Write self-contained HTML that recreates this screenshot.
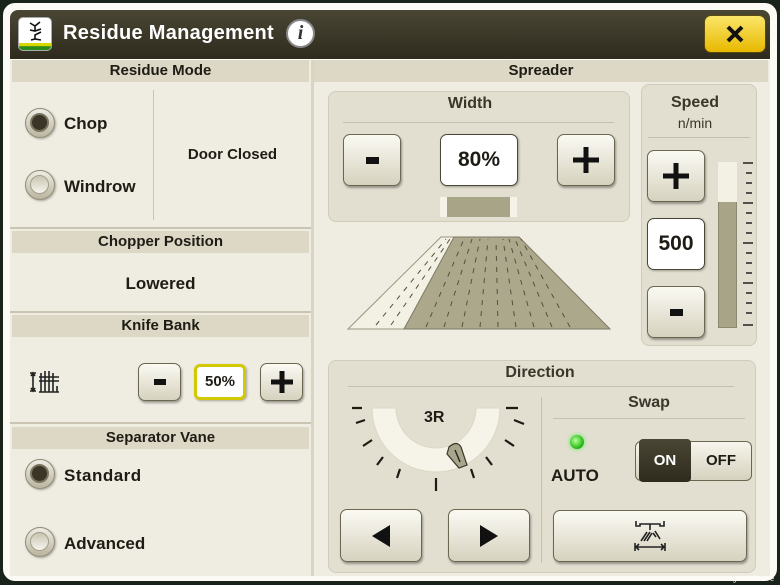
<!DOCTYPE html>
<html><head><meta charset="utf-8"><style>
*{box-sizing:border-box;margin:0;padding:0}
body{width:780px;height:585px;background:#1a231a;position:relative;overflow:hidden;font-family:"Liberation Sans","DejaVu Sans",sans-serif;font-weight:bold;color:#1e1c14}
.a{position:absolute}
.scr{left:3px;top:3px;width:774px;height:578px;background:#fbfaf5;border-radius:12px}
.tb{left:10px;top:10px;width:760px;height:49px;background:linear-gradient(#4a4634,#2e2b1e);border-radius:8px 8px 0 0}
.body{background:#efece1}
.hd{background:#dcd8c5;text-align:center;font-size:15px;line-height:22px}
.btn{background:linear-gradient(#fbfaf3,#d6d2bf);border:1.5px solid #6b6650;border-radius:7px;box-shadow:1px 2px 2px rgba(0,0,0,.35);display:flex;align-items:center;justify-content:center}
.val{background:#fff;border:1.5px solid #4b4738;border-radius:7px;text-align:center;font-size:21px;box-shadow:1px 1px 2px rgba(0,0,0,.3)}
.grp{background:#e2dfd1;border:1px solid #d0ccba;border-radius:8px}
.rad{width:30px;height:30px;border-radius:50%;background:linear-gradient(#efede4,#b9b59f);border:1.5px solid #8f8b77;box-shadow:1px 1px 2px rgba(0,0,0,.3)}
.rad i{position:absolute;left:4px;top:4px;width:19px;height:19px;border-radius:50%;background:linear-gradient(#c9c5b2,#f6f4ec);border:1px solid #a29e88}
.rad.on i{background:#3a3526;border:2px solid #7a7560}
.t{font-size:17px}
.c{text-align:center}
</style></head><body>
<div class="a scr"></div>
<div class="a tb"></div>
<div class="a" style="left:18px;top:17px;width:34px;height:34px;background:#fff;border-radius:5px;overflow:hidden;border:1px solid #aaa"><div class="a" style="left:0;top:25px;width:34px;height:9px;background:linear-gradient(#d8d800 30%,#2a8a1a 40%)"></div>
<svg class="a" style="left:8px;top:2px" width="18" height="22" viewBox="0 0 18 22"><g stroke="#111" stroke-width="1.6" fill="none"><path d="M3 3l5 3 5-4M8 6v5M3 10l5 1 6-2M14 12l-6 3v4M4 20l4-1 6 1"/></g></svg></div>
<div class="a" style="left:63px;top:22px;color:#fff;font-size:20px;letter-spacing:.3px">Residue Management</div>
<div class="a" style="left:286px;top:19px;width:29px;height:29px;border-radius:50%;background:#fff;border:2px solid #888;color:#333;font-family:'Liberation Serif',serif;font-style:italic;font-size:20px;text-align:center;line-height:25px">i</div>
<div class="a" style="left:704px;top:15px;width:62px;height:38px;background:linear-gradient(#fbe66a,#e7b800);border:1.5px solid #5a4a10;border-radius:7px"><svg class="a" style="left:21px;top:9px" width="18" height="18"><path d="M2 2L16 16M16 2L2 16" stroke="#111" stroke-width="4"/></svg></div>

<!-- left -->
<div class="a body" style="left:10px;top:60px;width:301px;height:516px"></div>
<div class="a hd" style="left:12px;top:60px;width:297px;height:22px">Residue Mode</div>
<div class="a" style="left:153px;top:90px;width:1px;height:130px;background:#c9c5b2"></div>
<div class="a rad on" style="left:25px;top:108px"><i></i></div><div class="a t" style="left:64px;top:114px">Chop</div>
<div class="a rad" style="left:25px;top:170px"><i></i></div><div class="a t" style="left:64px;top:177px">Windrow</div>
<div class="a" style="left:154px;top:146px;width:157px;text-align:center;font-size:15px">Door Closed</div>
<div class="a" style="left:10px;top:227px;width:301px;height:2px;background:#c9c5b2"></div>
<div class="a hd" style="left:12px;top:231px;width:297px;height:22px">Chopper Position</div>
<div class="a t c" style="left:10px;top:274px;width:301px">Lowered</div>
<div class="a" style="left:10px;top:311px;width:301px;height:2px;background:#c9c5b2"></div>
<div class="a hd" style="left:12px;top:315px;width:297px;height:22px">Knife Bank</div>
<svg class="a" style="left:28px;top:368px" width="36" height="28" viewBox="0 0 36 28"><g stroke="#222" stroke-width="1.6" fill="none"><path d="M5 5v18M2 5h6M2 23h6M3 8l2-3 2 3M3 20l2 3 2-3"/><path d="M13 5v15M17 3v17M21 3v17M25 5v15M11 9h20M11 13h20M11 24h20M13 18v6M17 18v6M21 18v6M25 18v6M29 18v6"/></g></svg>
<div class="a btn" style="left:138px;top:363px;width:43px;height:38px"><svg width="12" height="6"><rect width="12" height="6" fill="#111"/></svg></div>
<div class="a val" style="left:194px;top:364px;width:52px;height:36px;border:3px solid #d4c800;font-size:15px;line-height:30px;border-radius:6px">50%</div>
<div class="a btn" style="left:260px;top:363px;width:43px;height:38px"><svg width="24" height="24"><path d="M12 1v22M1 12h22" stroke="#111" stroke-width="5"/></svg></div>
<div class="a" style="left:10px;top:422px;width:301px;height:2px;background:#c9c5b2"></div>
<div class="a hd" style="left:12px;top:427px;width:297px;height:22px">Separator Vane</div>
<div class="a rad on" style="left:25px;top:459px"><i></i></div><div class="a t" style="left:64px;top:466px;letter-spacing:.5px">Standard</div>
<div class="a rad" style="left:25px;top:527px"><i></i></div><div class="a t" style="left:64px;top:534px">Advanced</div>

<!-- right -->
<div class="a body" style="left:314px;top:60px;width:456px;height:516px"></div>
<div class="a" style="left:311px;top:60px;width:3px;height:516px;background:#d9d5c3"></div>
<div class="a hd" style="left:314px;top:60px;width:454px;height:22px">Spreader</div>
<div class="a grp" style="left:328px;top:91px;width:302px;height:131px"></div>
<div class="a c" style="left:328px;top:95px;width:284px;font-size:16px;color:#3a372a">Width</div>
<div class="a" style="left:343px;top:122px;width:271px;height:1px;background:#c4c0ad"></div>
<div class="a btn" style="left:343px;top:134px;width:58px;height:52px"><svg width="13" height="7"><rect width="13" height="7" fill="#111"/></svg></div>
<div class="a val" style="left:440px;top:134px;width:78px;height:52px;line-height:50px">80%</div>
<div class="a btn" style="left:557px;top:134px;width:58px;height:52px"><svg width="28" height="28"><path d="M14 1v26M1 14h26" stroke="#111" stroke-width="5"/></svg></div>
<div class="a" style="left:440px;top:197px;width:77px;height:20px;background:#f5f3e8"></div>
<div class="a" style="left:447px;top:197px;width:63px;height:20px;background:#a8a487"></div>
<svg class="a" style="left:346px;top:235px" width="268" height="98" viewBox="0 0 268 98">
<polygon points="2,94 95,2 110,2 58,94" fill="#f3f1e4" stroke="#9a9680"/>
<polygon points="58,94 108,2 173,2 264,94" fill="#aca88c" stroke="#7e7a64"/>
<g stroke="#555040" stroke-width="1" stroke-dasharray="5,6" fill="none">
<path d="M30 90L100 4M45 90L104 4"/>
<path d="M80 92L118 4M98 92L126 4M116 92L134 4M134 92L142 4M152 92L150 4M170 92L157 4M188 92L163 4M206 92L169 4M224 92L175 4"/></g></svg>
<div class="a grp" style="left:641px;top:84px;width:116px;height:262px"></div>
<div class="a c" style="left:641px;top:94px;width:108px;font-size:16px;color:#3a372a">Speed</div>
<div class="a c" style="left:641px;top:115px;width:108px;font-size:14px;font-weight:normal;color:#3a372a">n/min</div>
<div class="a" style="left:648px;top:137px;width:102px;height:1px;background:#c4c0ad"></div>
<div class="a btn" style="left:647px;top:150px;width:58px;height:52px"><svg width="28" height="28"><path d="M14 1v26M1 14h26" stroke="#111" stroke-width="5"/></svg></div>
<div class="a val" style="left:647px;top:218px;width:58px;height:52px;line-height:50px">500</div>
<div class="a btn" style="left:647px;top:286px;width:58px;height:52px"><svg width="13" height="7"><rect width="13" height="7" fill="#111"/></svg></div>
<div class="a" style="left:718px;top:162px;width:19px;height:166px;background:#a8a487;border:1px solid #8d896f"></div>
<div class="a" style="left:718px;top:162px;width:19px;height:40px;background:#f3f1e4"></div>
<svg class="a" style="left:741px;top:160px" width="14" height="170"><g stroke="#222" stroke-width="1.4"><path d="M2 3h10M5 13h6M5 23h6M5 33h6M2 43h10M5 53h6M5 63h6M5 73h6M2 83h10M5 93h6M5 103h6M5 113h6M2 123h10M5 133h6M5 143h6M5 153h6M2 165h10"/></g></svg>

<div class="a grp" style="left:328px;top:360px;width:428px;height:213px"></div>
<div class="a c" style="left:328px;top:364px;width:424px;font-size:16px;color:#3a372a">Direction</div>
<div class="a" style="left:348px;top:386px;width:386px;height:1px;background:#c4c0ad"></div>
<div class="a" style="left:541px;top:397px;width:1px;height:166px;background:#c4c0ad"></div>
<svg class="a" style="left:345px;top:395px" width="180" height="100" viewBox="345 395 180 100">
<path d="M372 408A64 64 0 0 0 500 408L476 408A40 40 0 0 1 396 408Z" fill="#f6f4e8" stroke="#dcd8c6"/>
<g stroke="#1e1c14" stroke-width="2.2"><path d="M352 408h10M506 408h12M356 423l9 -3M514 420l10 4M363 446l9-6M505 440l9 6M377 465l6-8M486 457l6 8M397 478l3-9M471 469l3 9M436 478v13"/></g>
<path d="M449 447q8-7 12 0l6 18-8 3-12-14z" fill="#a9a68c" stroke="#3a372a" stroke-width="1.2"/><path d="M455 450l5 12" stroke="#222" stroke-width="1.4"/>
</svg>
<div class="a" style="left:424px;top:409px;font-size:16px">3R</div>
<div class="a btn" style="left:340px;top:509px;width:82px;height:53px"><svg width="18" height="22"><path d="M18 0v22L0 11z" fill="#111"/></svg></div>
<div class="a btn" style="left:448px;top:509px;width:82px;height:53px"><svg width="18" height="22"><path d="M0 0v22L18 11z" fill="#111"/></svg></div>
<div class="a c" style="left:553px;top:394px;width:192px;font-size:16px;color:#3a372a">Swap</div>
<div class="a" style="left:553px;top:418px;width:192px;height:1px;background:#c4c0ad"></div>
<div class="a" style="left:570px;top:435px;width:14px;height:14px;border-radius:50%;background:radial-gradient(circle at 40% 40%,#b8ff9a,#2fbf1e 60%,#1a7010);box-shadow:0 0 5px #5e5"></div>
<div class="a" style="left:551px;top:466px;font-size:17px">AUTO</div>
<div class="a" style="left:635px;top:441px;width:117px;height:40px;border-radius:6px;background:linear-gradient(#f7f5ec,#d6d2bf);border:1.5px solid #6b6650"></div>
<div class="a" style="left:639px;top:439px;width:52px;height:43px;background:linear-gradient(#4a4634,#2e2b1e);border-radius:4px;color:#fff;font-size:15px;text-align:center;line-height:43px">ON</div>
<div class="a" style="left:696px;top:452px;width:50px;text-align:center;font-size:15px">OFF</div>
<div class="a btn" style="left:553px;top:510px;width:194px;height:52px"><svg width="34" height="34" viewBox="0 0 34 34"><g stroke="#222" stroke-width="1.6" fill="none"><path d="M3 2v5h4v-2h20v2h4v-5M17 5v6"/><path d="M8 22l6-9M11 22l6-9M14 22l5-8M20 14l3 4M22 12l5 8"/><path d="M2 24v8M32 24v8M3 28h28M6 25l-3 3 3 3M28 25l3 3-3 3"/></g></svg></div>
<div class="a" style="left:728px;top:576px;font-size:7px;font-weight:normal;color:#fff;font-family:'Liberation Mono',monospace">Agriculture</div>
</body></html>
